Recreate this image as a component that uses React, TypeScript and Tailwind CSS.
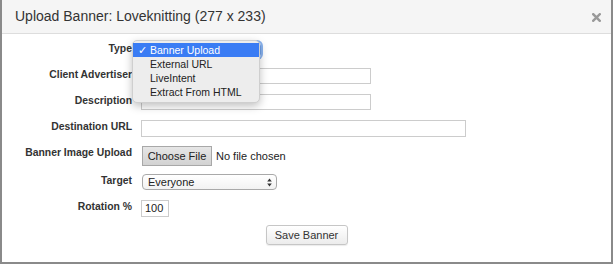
import React from "react";

const labelCls =
  "w-[130px] shrink-0 text-right font-bold text-[10.4px] leading-[13px] text-[#333]";

function Row({ label, className = "", children }: { label: string; className?: string; children: React.ReactNode }) {
  return (
    <div className={`flex items-start ${className}`}>
      <div className={labelCls}>{label}</div>
      <div className="ml-[9px] flex items-center">{children}</div>
    </div>
  );
}

const options = ["Banner Upload", "External URL", "LiveIntent", "Extract From HTML"];

export default function App() {
  return (
    <div className="relative w-[613px] h-[264px] bg-white border-x-2 border-b-2 border-[#8a8a8a] font-['Liberation_Sans',Arial,sans-serif] text-[#333]">
      <div className="h-[34px] bg-[#f5f5f5] border-b border-[#dddddd] flex items-center justify-between pl-[13px] pr-[10px]">
        <span className="text-[14px]">Upload Banner: Loveknitting (277 x 233)</span>
        <svg width="9" height="9" viewBox="0 0 9 9" className="mt-[2px]">
          <path d="M1.2 1.2 L7.8 7.8 M7.8 1.2 L1.2 7.8" stroke="#9a9a9a" strokeWidth="2.4" strokeLinecap="square" />
        </svg>
      </div>

      <div className="flex flex-col pt-[8px]">
        <Row label="Type">
          <div className="h-[16px] w-[120px] rounded-[4px] border border-[#6fa0e8] ring-2 ring-[#8ab4f0]" />
        </Row>
        <Row label="Client Advertiser" className="mt-[10px]">
          <div className="h-[16px] w-[230px] border border-[#cccccc] bg-white" />
        </Row>
        <Row label="Description" className="mt-[10px]">
          <div className="h-[16px] w-[230px] border border-[#cccccc] bg-white" />
        </Row>
        <Row label="Destination URL" className="mt-[10px]">
          <div className="h-[17px] w-[325px] border border-[#cccccc] bg-white" />
        </Row>
        <Row label="Banner Image Upload" className="mt-[9px]">
          <button className="ml-[1px] h-[20px] w-[70px] border border-[#a8a8a8] bg-gradient-to-b from-[#e6e6e6] to-[#d2d2d2] text-[11px] text-[#222]">
            Choose File
          </button>
          <span className="ml-[4px] text-[11px] text-[#222]">No file chosen</span>
        </Row>
        <Row label="Target" className="mt-[8px]">
          <div className="ml-[1px] h-[16px] w-[135px] rounded-[4px] border border-[#a9a9a9] bg-gradient-to-b from-white to-[#f2f2f2] flex items-center justify-between pl-[5px] pr-[4px]">
            <span className="text-[11px] text-[#222]">Everyone</span>
            <svg width="5" height="9" viewBox="0 0 5 9">
              <path d="M2.5 0.5 L4.8 3.6 L0.2 3.6 Z M2.5 8.5 L4.8 5.4 L0.2 5.4 Z" fill="#333" />
            </svg>
          </div>
        </Row>
        <Row label="Rotation %" className="mt-[10px]">
          <div className="h-[17px] w-[28px] border border-[#cccccc] bg-white flex items-center pl-[3px] text-[11px] text-[#222]">
            100
          </div>
        </Row>
        <div className="mt-[8px] flex justify-center">
          <button className="h-[20px] w-[82px] rounded-[3px] border border-[#c6c6c6] bg-gradient-to-b from-white to-[#ececec] text-[11px] text-[#333] shadow-[0_1px_1px_rgba(0,0,0,0.08)]">
            Save Banner
          </button>
        </div>
      </div>

      <div className="absolute left-[130px] top-[40px] w-[128px] h-[63px] rounded-[5px] bg-[#ededed] border border-[#cfcfcf] shadow-[0_3px_8px_rgba(0,0,0,0.25)] pt-[2px]">
        {options.map((o, i) => (
          <div
            key={o}
            className={`h-[14px] flex items-center text-[10.5px] leading-[14px] ${i === 0 ? "bg-[#3a7cf4] text-white" : "text-[#222]"}`}
          >
            <span className="w-[17px] pl-[5px] text-[11px]">{i === 0 ? "✓" : ""}</span>
            <span>{o}</span>
          </div>
        ))}
      </div>
    </div>
  );
}
